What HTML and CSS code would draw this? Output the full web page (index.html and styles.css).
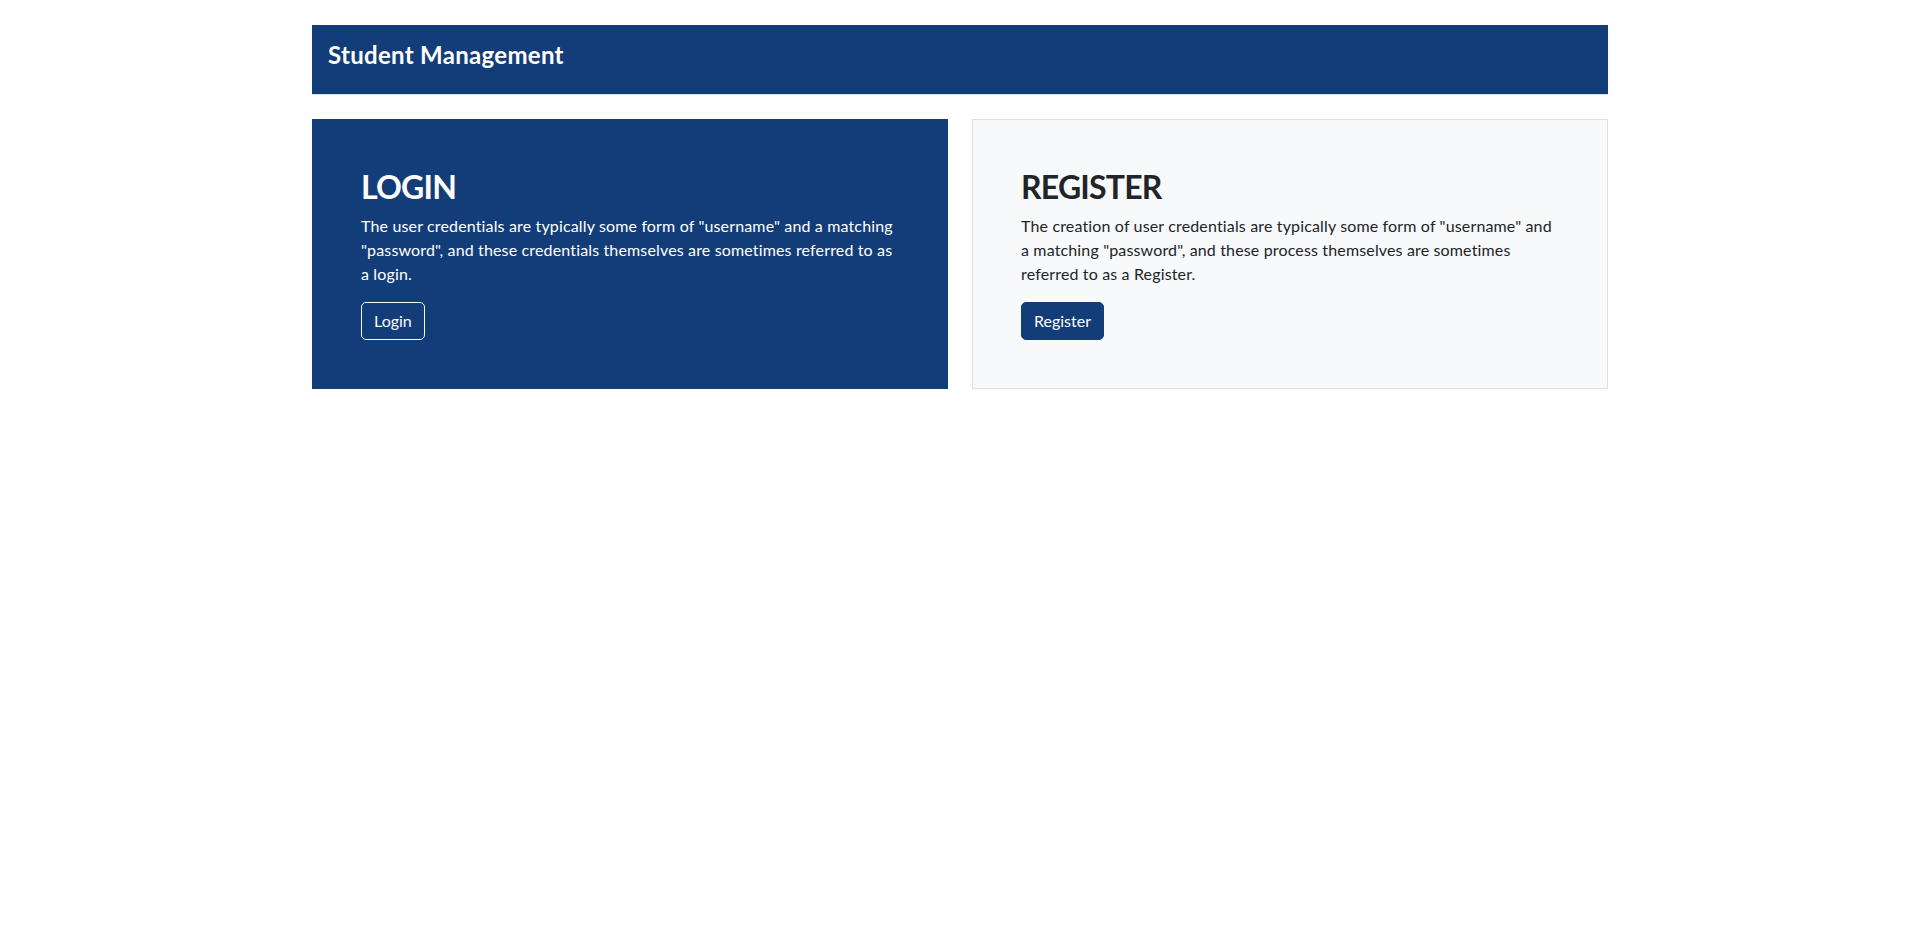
FILE: index.html
```html
<!DOCTYPE html>
<html lang="en">
<head>
<meta charset="utf-8">
<title>Student Management</title>
<link rel="stylesheet" href="styles.css">
</head>
<body>
<div class="container">
  <header class="topbar">
    <h1 class="brand">Student Management</h1>
  </header>
  <div class="row">
    <section class="panel panel-dark">
      <h2 class="panel-title">LOGIN</h2>
      <p class="panel-text">The user credentials are typically some form of "username" and a matching "password", and these credentials themselves are sometimes referred to as a login.</p>
      <a class="btn btn-outline-light" href="#">Login</a>
    </section>
    <section class="panel panel-light">
      <h2 class="panel-title">REGISTER</h2>
      <p class="panel-text">The creation of user credentials are typically some form of "username" and a matching "password", and these process themselves are sometimes referred to as a Register.</p>
      <a class="btn btn-primary" href="#">Register</a>
    </section>
  </div>
</div>
</body>
</html>
```
FILE: styles.css
```css
* { box-sizing: border-box; }
html, body { margin: 0; padding: 0; background: #fff; }
body {
  font-family: Lato, "Open Sans", "Noto Sans", sans-serif;
  font-size: 16px;
  line-height: 1.5;
  color: #212529;
}
.container {
  width: 1296px;
  margin: 0 auto;
  padding-top: 25px;
}
.topbar {
  background: #133d79;
  color: #fff;
  padding: 16px 16px;
  border-bottom: 1px solid #dee2e6;
}
.brand {
  margin: 0 0 8px;
  font-size: 24px;
  font-weight: 700;
  line-height: 1.2;
  letter-spacing: 0.3px;
}
.row {
  display: grid;
  grid-template-columns: 1fr 1fr;
  gap: 24px;
  margin-top: 24px;
}
.panel {
  padding: 48px;
  border: 1px solid transparent;
}
.panel-dark {
  background: #133d79;
  border-color: #133d79;
  color: #fff;
}
.panel-light {
  background: #f8f9fa;
  border-color: #dee2e6;
  color: #212529;
}
.panel-title {
  margin: 0 0 8px;
  font-size: 32px;
  font-weight: 700;
  line-height: 1.2;
  letter-spacing: -0.8px;
}
.panel-text {
  margin: 0 0 16px;
  letter-spacing: 0.15px;
}
.btn {
  display: inline-block;
  padding: 6px 12px;
  font-size: 16px;
  line-height: 24px;
  border: 1px solid transparent;
  border-radius: 5px;
  text-decoration: none;
}
.btn-outline-light {
  color: #f8f9fa;
  border-color: #f8f9fa;
}
.btn-primary {
  color: #fff;
  background: #133d79;
  border-color: #133d79;
}
```
